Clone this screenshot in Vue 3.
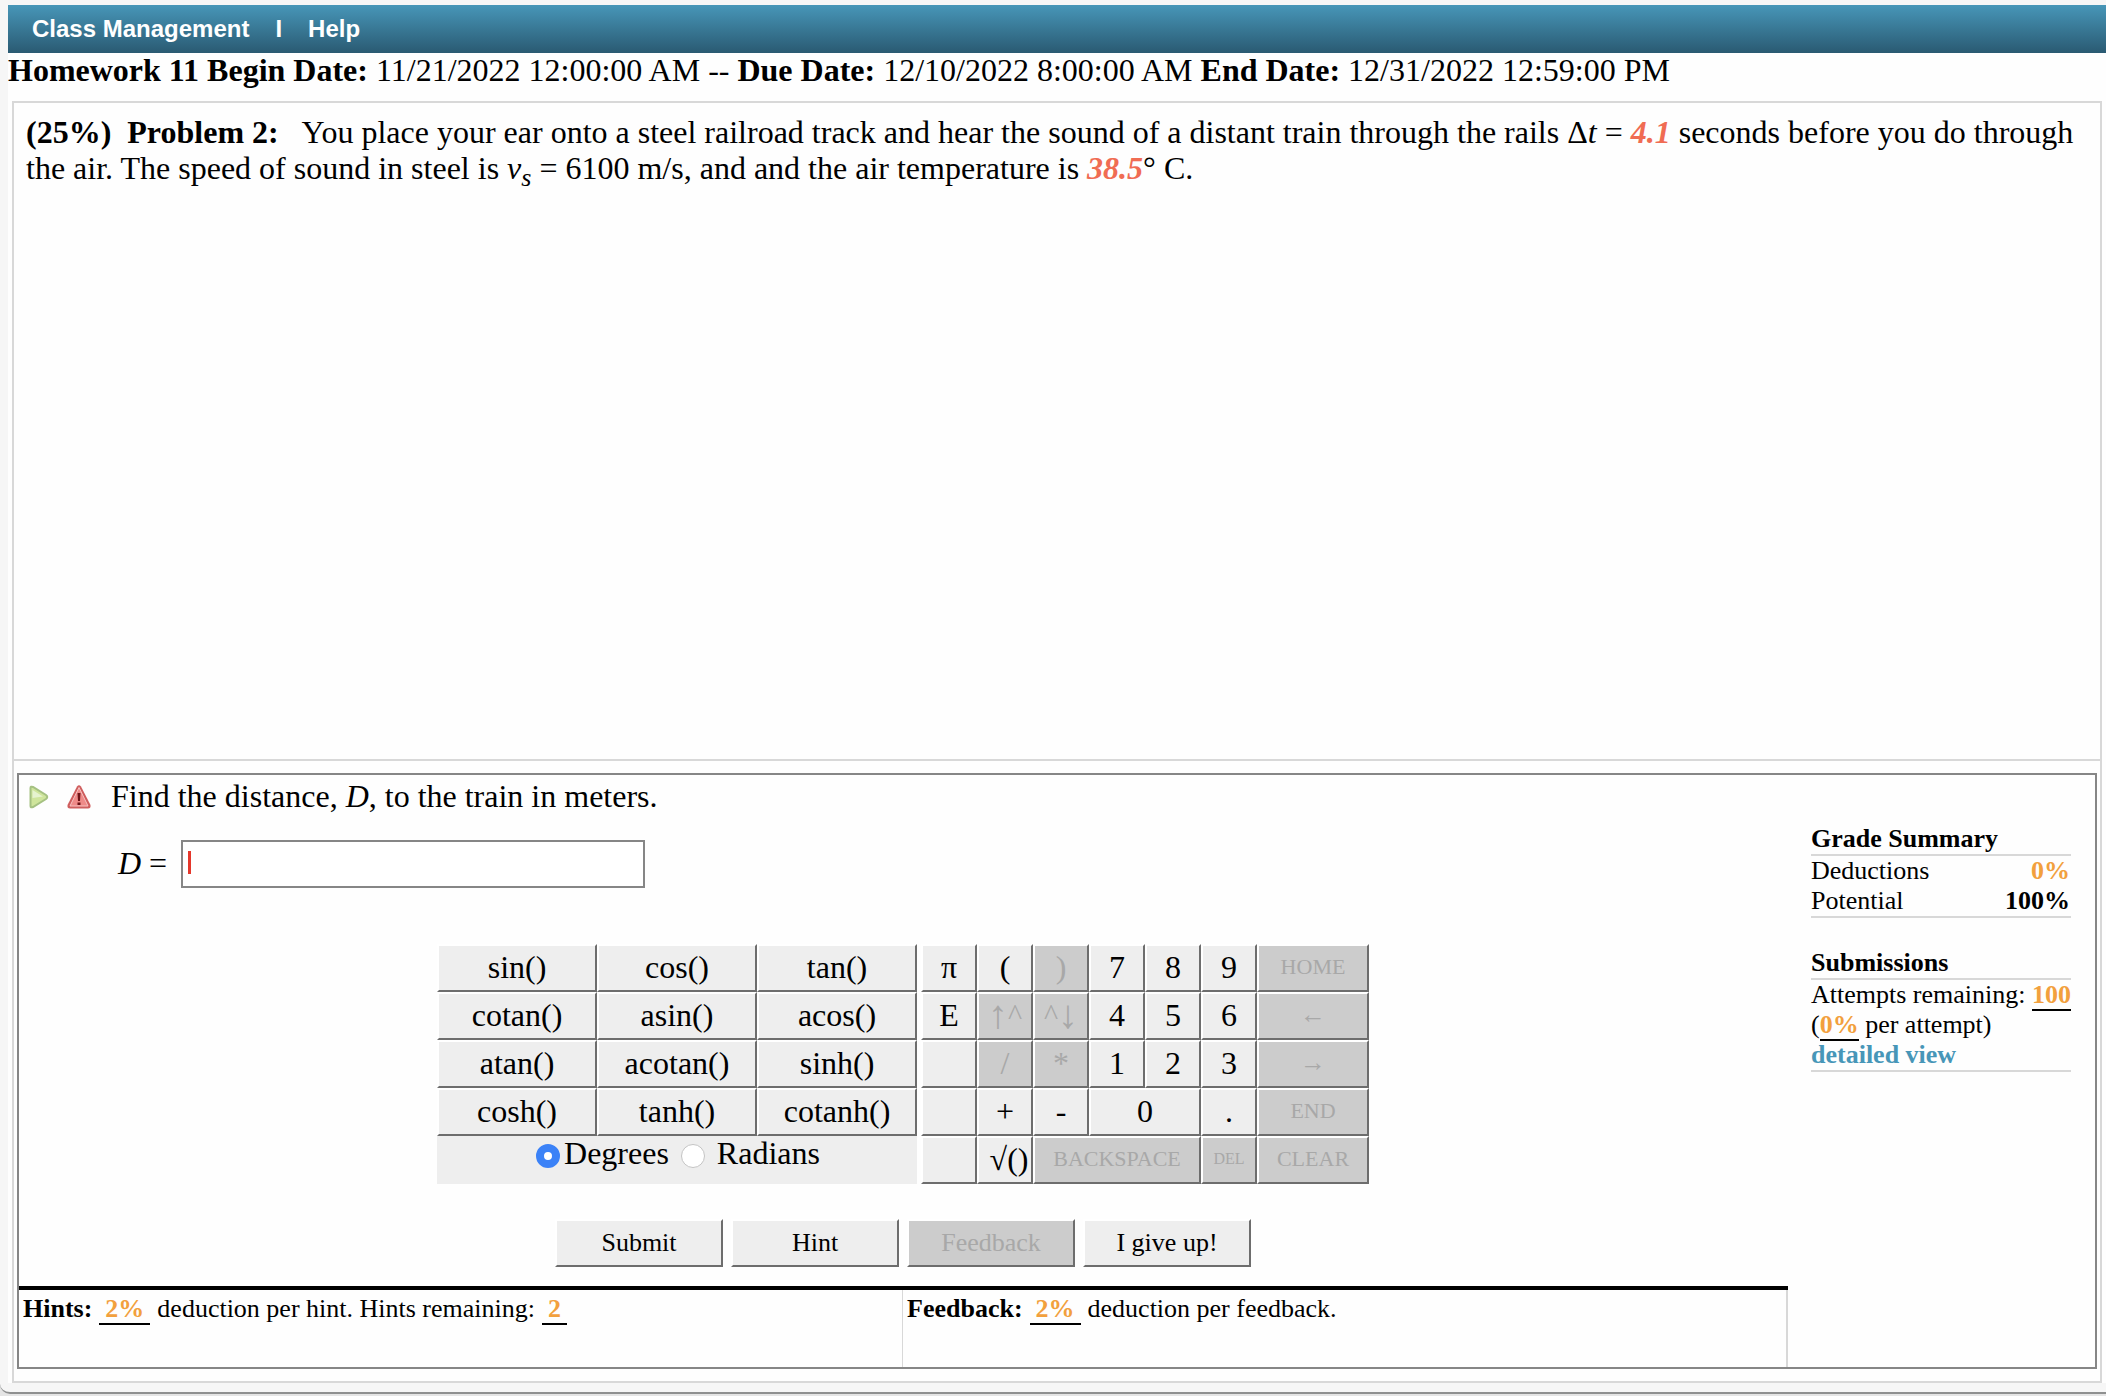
<script setup>
import { ref } from 'vue'

const angleUnit = ref('degrees')
const answer = ref('')

const functionKeys = [
  'sin()', 'cos()', 'tan()',
  'cotan()', 'asin()', 'acos()',
  'atan()', 'acotan()', 'sinh()',
  'cosh()', 'tanh()', 'cotanh()',
]

const padKeys = [
  { t: 'π' }, { t: '(' }, { t: ')', off: true }, { t: '7' }, { t: '8' }, { t: '9' }, { t: 'HOME', off: true, kind: 'word wide2' },
  { t: 'E' }, { t: '↑^', off: true, kind: 'power' }, { t: '^↓', off: true, kind: 'power' }, { t: '4' }, { t: '5' }, { t: '6' }, { t: '←', off: true, kind: 'move wide2' },
  { t: '' }, { t: '/', off: true }, { t: '*', off: true }, { t: '1' }, { t: '2' }, { t: '3' }, { t: '→', off: true, kind: 'move wide2' },
  { t: '' }, { t: '+' }, { t: '-' }, { t: '0', kind: 'wide2' }, { t: '.' }, { t: 'END', off: true, kind: 'word wide2' },
  { t: '' }, { t: '√()', kind: 'root' }, { t: 'BACKSPACE', off: true, kind: 'word wide3' }, { t: 'DEL', off: true, kind: 'tiny' }, { t: 'CLEAR', off: true, kind: 'word wide2' },
]

const actions = [
  { t: 'Submit' }, { t: 'Hint' }, { t: 'Feedback', off: true }, { t: 'I give up!' },
]
</script>

<template>
  <div class="window">
    <div class="page">
      <nav class="nav">
        <a href="#">Class Management</a>
        <span>I</span>
        <a href="#">Help</a>
      </nav>

      <p class="dates">
        <b>Homework 11 Begin Date:</b> 11/21/2022 12:00:00 AM -- <b>Due Date:</b>
        12/10/2022 8:00:00 AM <b>End Date:</b> 12/31/2022 12:59:00 PM
      </p>

      <main class="problem">
        <section class="statement">
          <b>(25%)&nbsp; Problem 2:</b> &nbsp; You place your ear onto a steel railroad track and hear the
          sound of a distant train through the rails Δ<i>t</i> = <em>4.1</em> seconds before you do through
          the air. The speed of sound in steel is <i>v<sub>s</sub></i> = 6100 m/s, and and the air
          temperature is <em>38.5</em>° C.
        </section>

        <section class="part">
          <div class="work">
            <div class="question">
              <svg class="play" viewBox="0 0 20 24" aria-hidden="true">
                <path d="M1.500 3 Q1.500 1 4 2 L17 10 Q19.500 12 17 14 L4 22 Q1.500 23 1.500 21Z" fill="#cfe59c" stroke="#a5c182" stroke-width="2" />
                <path d="M3.500 5 L14 11.500 L3.500 13Z" fill="#e6f3cf" />
              </svg>
              <svg class="warn" viewBox="0 0 24 26" aria-hidden="true">
                <path d="M10 2.500 Q12 0 14 2.500 L23.500 21 Q24 24.500 21 24.500 H3 Q0 24.500 .5 21Z" fill="#cf5e5e" />
                <path d="M12 3.500 L21 22 H3Z" fill="#ee8a88" stroke="#f7c3c2" stroke-width="1" />
                <path d="M10.500 9 H13.500 L13 17 H11Z M10.500 18.500 H13.500 V21 H10.500Z" fill="#6e1518" />
              </svg>
              <span>Find the distance, <i>D</i>, to the train in meters.</span>
            </div>

            <div class="answer">
              <label for="answer"><i>D</i> =</label>
              <div class="field">
                <input id="answer" v-model="answer" type="text" autocomplete="off" />
                <span class="caret"></span>
              </div>
            </div>

            <div class="keyboard">
              <div class="functions">
                <button v-for="k in functionKeys" :key="k" type="button" class="key">{{ k }}</button>
                <div class="units">
                  <input id="deg" v-model="angleUnit" type="radio" name="unit" value="degrees" />
                  <label for="deg">Degrees</label>
                  <input id="rad" v-model="angleUnit" type="radio" name="unit" value="radians" />
                  <label for="rad" class="spaced">Radians</label>
                </div>
              </div>
              <div class="pad">
                <button v-for="(k, i) in padKeys" :key="i" type="button" class="key" :class="k.kind" :disabled="k.off">
                  <template v-if="k.kind === 'power'">
                    <span v-for="c in k.t" :key="c" :class="{ arrow: c !== '^' }">{{ c }}</span>
                  </template>
                  <template v-else>{{ k.t }}</template>
                </button>
              </div>
            </div>

            <div class="actions">
              <button v-for="a in actions" :key="a.t" type="button" class="key action" :disabled="a.off">{{ a.t }}</button>
            </div>

            <div class="notes">
              <div class="note"><b>Hints:</b><span class="blank">2%</span>deduction per hint. Hints remaining:<span class="blank">2</span></div>
              <div class="note"><b>Feedback:</b><span class="blank">2%</span>deduction per feedback.</div>
            </div>
          </div>

          <aside class="summary">
            <h2>Grade Summary</h2>
            <div class="block">
              <div class="row"><span>Deductions</span><b class="orange">0%</b></div>
              <div class="row"><span>Potential</span><b>100%</b></div>
            </div>
            <h2>Submissions</h2>
            <div class="block">
              <div>Attempts remaining: <span class="fill">100</span></div>
              <div>(<span class="fill">0%</span> per attempt)</div>
              <a href="#">detailed view</a>
            </div>
          </aside>
        </section>
      </main>
    </div>
  </div>
</template>

<style>
body {
  margin: 0;
  background: #e5e5e5;
}
</style>

<style scoped>
* {
  box-sizing: border-box;
}

.window {
  padding: 5px 0 9px 8px;
  background: #f6f6f6;
  border-bottom: 2px solid #8f9090;
  border-bottom-left-radius: 10px;
  font-family: "Liberation Serif", "Times New Roman", serif;
  font-size: 32px;
  line-height: 36px;
  color: #000;
}

.page {
  background: #fefefe;
}

.nav {
  display: flex;
  align-items: center;
  height: 48px;
  padding-left: 24px;
  gap: 26px;
  background: linear-gradient(#4796b8, #2a5a72);
  color: #fff;
  font: bold 24px/28px "Liberation Sans", Arial, sans-serif;
}

.nav a {
  color: inherit;
  text-decoration: none;
}

.dates {
  margin: 0 0 14px;
  line-height: 34px;
}

.problem {
  margin: 0 4px;
  border: 2px solid #d8d8d8;
}

.statement {
  height: 658px;
  padding: 11px 0 0 12px;
  border-bottom: 2px solid #d8d8d8;
}

.statement em {
  color: #f06c53;
  font-weight: bold;
}

.statement sub {
  font-size: 26px;
  line-height: 0;
}

.part {
  display: flex;
  margin: 12px 3px;
  border: 2px solid #868686;
}

.work {
  display: flex;
  flex-direction: column;
  width: 1769px;
}

.question {
  display: flex;
  align-items: center;
  height: 44px;
  padding-left: 10px;
}

.question span {
  padding-bottom: 2px;
}

.play {
  width: 20px;
  height: 24px;
  margin-right: 18px;
}

.warn {
  width: 24px;
  height: 26px;
  margin-right: 20px;
}

.answer {
  display: flex;
  align-items: center;
  margin-top: 21px;
  padding-left: 99px;
  gap: 14px;
}

.answer label {
  padding-bottom: 2px;
}

.field {
  position: relative;
}

.field input {
  display: block;
  width: 464px;
  height: 48px;
  padding: 0 6px;
  border: 2px solid #868686;
  background: #fff;
  font: inherit;
}

.caret {
  position: absolute;
  left: 7px;
  top: 11px;
  width: 3px;
  height: 23px;
  background: #e5372b;
}

.keyboard {
  display: flex;
  justify-content: center;
  gap: 4px;
  margin-top: 56px;
  padding-right: 1px;
}

.functions {
  display: grid;
  grid-template-columns: repeat(3, 160px);
  grid-auto-rows: 48px;
}

.pad {
  display: grid;
  grid-template-columns: repeat(8, 56px);
  grid-auto-rows: 48px;
}

.key {
  padding: 0 0 2px;
  border: 2px solid;
  border-color: #fff #6d6d6d #6d6d6d #fff;
  background: #eee;
  color: #000;
  font: inherit;
}

.key:disabled {
  background: #ccc;
  color: #a8a8a8;
}

.word {
  font-size: 22px;
}

.move {
  font-size: 26px;
}

.tiny {
  font-size: 16px;
}

.power {
  display: flex;
  align-items: center;
  justify-content: center;
  font-size: 30px;
}

.arrow {
  font-size: 40px;
}

.root {
  padding-left: 8px;
}

.wide2 {
  grid-column: span 2;
}

.wide3 {
  grid-column: span 3;
}

.units {
  grid-column: span 3;
  display: flex;
  justify-content: center;
  padding-right: 10px;
  background: #eee;
  line-height: 34px;
}

.units input {
  appearance: none;
  width: 24px;
  height: 24px;
  margin: 8px 4px 0 12px;
  border: 1px solid #c4c4c4;
  border-radius: 50%;
  background: #fff;
}

.units input:checked {
  border: 8px solid #3b82f7;
}

.units .spaced {
  padding-left: 8px;
}

.actions {
  display: flex;
  justify-content: center;
  gap: 8px;
  margin-top: 35px;
  padding-right: 1px;
}

.action {
  width: 168px;
  height: 48px;
  padding: 0;
  font-size: 26px;
}

.notes {
  display: flex;
  margin-top: 19px;
  border-top: 4px solid #000;
}

.note {
  flex: 1;
  height: 77px;
  padding: 4px;
  border-right: 1px solid #d8d8d8;
  font-size: 26px;
  line-height: 30px;
}

.note:last-child {
  border-right-width: 2px;
}

.blank,
.fill {
  border-bottom: 2px solid #000;
  color: #f2a03d;
  font-weight: bold;
}

.blank {
  margin: 0 7px;
  padding: 0 6px;
}

.summary {
  flex: 1;
  padding: 49px 24px 0 23px;
  font-size: 26px;
  line-height: 30px;
}

.summary h2 {
  margin: 0;
  font-size: 26px;
  line-height: 30px;
  border-bottom: 2px solid #d8d8d8;
}

.block {
  margin-bottom: 30px;
  border-bottom: 2px solid #d8d8d8;
}

.row {
  display: flex;
  justify-content: space-between;
  padding-right: 1px;
}

.orange {
  color: #f2a03d;
}

.summary a {
  display: block;
  color: #4796b8;
  font-weight: bold;
  text-decoration: none;
}
</style>
